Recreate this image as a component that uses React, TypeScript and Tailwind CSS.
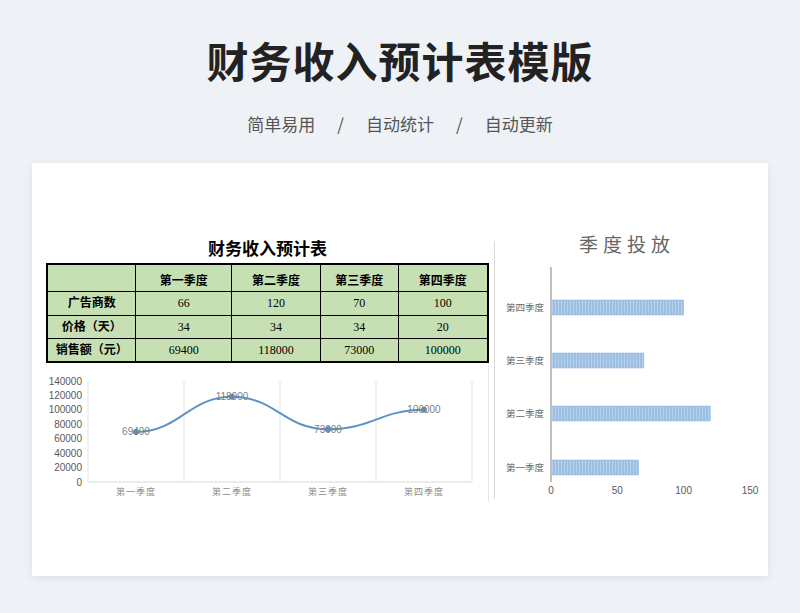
const serif = { fontFamily: '"Liberation Serif", "Noto Sans CJK SC", serif' };

const quarters = ["第一季度", "第二季度", "第三季度", "第四季度"];
const rows = [
  { name: "广告商数", vals: ["66", "120", "70", "100"] },
  { name: "价格（天）", vals: ["34", "34", "34", "20"] },
  { name: "销售额（元）", vals: ["69400", "118000", "73000", "100000"] },
];
const sales = [69400, 118000, 73000, 100000];
const ads = [66, 120, 70, 100];

function LineChart() {
  // svg local coords: width 442, height 137
  const x0 = 42, w = 384, yb = 117, yt = 16;
  const px = (i: number) => x0 + w / 8 + (i * w) / 4;
  const py = (v: number) => yb - ((yb - yt) * v) / 140000;
  const pts = sales.map((v, i) => [px(i), py(v)]);
  let d = `M${pts[0][0]},${pts[0][1]}`;
  for (let i = 0; i < pts.length - 1; i++) {
    const [ax, ay] = pts[i], [bx, by] = pts[i + 1];
    const dx = (bx - ax) / 2.2;
    d += ` C${ax + dx},${ay} ${bx - dx},${by} ${bx},${by}`;
  }
  return (
    <svg width="442" height="137" className="block" style={{ fontFamily: '"Liberation Sans", sans-serif' }}>
      {[0, 1, 2, 3, 4].map((i) => (
        <line key={i} x1={x0 + (i * w) / 4} x2={x0 + (i * w) / 4} y1={yt} y2={yb} stroke="#e3e3e3" />
      ))}
      <line x1={x0} x2={x0 + w} y1={yb} y2={yb} stroke="#d9d9d9" />
      {[0, 20000, 40000, 60000, 80000, 100000, 120000, 140000].map((v) => (
        <text key={v} x={x0 - 6} y={py(v) + 3.5} fontSize="10" fill="#595959" textAnchor="end">{v}</text>
      ))}
      <path d={d} fill="none" stroke="#5b93c5" strokeWidth="2" />
      {pts.map(([x, y], i) => (
        <g key={i}>
          <circle cx={x} cy={y} r="3" fill="#5b93c5" />
          <text x={x} y={y + 3.5} fontSize="10" fill="#7f7f7f" textAnchor="middle">{sales[i]}</text>
        </g>
      ))}
      {quarters.map((q, i) => (
        <text key={q} x={px(i)} y={yb + 13} fontSize="9" fill="#8c8c8c" textAnchor="middle" style={serif} letterSpacing="1">{q}</text>
      ))}
    </svg>
  );
}

function BarChart() {
  // svg width 270, height 260; axis at x=56
  const ax = 56, scale = 199 / 150;
  const ys = [228, 174, 121, 68]; // 第一..第四 bar tops (relative)
  return (
    <svg width="270" height="265" className="block">
      <text x="132" y="20" fontSize="19" fill="#666" textAnchor="middle" letterSpacing="5" style={serif}>季度投放</text>
      <defs>
        <pattern id="st" width="3" height="4" patternUnits="userSpaceOnUse">
          <rect width="3" height="4" fill="#9dc0e2" />
          <rect width="1" height="4" fill="#b4d0ec" />
        </pattern>
      </defs>
      {ys.map((y, i) => (
        <g key={i}>
          <rect x={ax} y={y} width={ads[i] * scale} height="15" fill="url(#st)" stroke="#8db4db" strokeWidth="0.5" />
          <text x={ax - 7} y={y + 11} fontSize="9.5" fill="#666" textAnchor="end" style={serif}>{quarters[i]}</text>
        </g>
      ))}
      <line x1={ax} x2={ax} y1="35" y2="250" stroke="#bfbfbf" strokeWidth="2" />
      {[0, 50, 100, 150].map((v) => (
        <text key={v} x={ax + v * scale} y="262" fontSize="10" fill="#595959" textAnchor="middle" style={{ fontFamily: '"Liberation Sans", sans-serif' }}>{v}</text>
      ))}
    </svg>
  );
}

export default function App() {
  return (
    <div className="w-[800px] h-[613px] bg-[#eef1f5] flex flex-col items-center" style={{ fontFamily: '"Noto Sans CJK SC", sans-serif' }}>
      <h1 className="mt-[30px] text-[42px] leading-[60px] font-bold text-[#222] tracking-[1px]">财务收入预计表模版</h1>
      <div className="mt-[20px] flex items-center gap-[22px] text-[17px] text-[#555] leading-[28px]">
        <span>简单易用</span><span>/</span><span>自动统计</span><span>/</span><span>自动更新</span>
      </div>
      <div className="mt-[25px] w-[736px] h-[413px] bg-white shadow-[0_2px_8px_rgba(0,0,0,0.08)] flex pl-[14px] pt-[76px]">
        <div className="w-[443px] flex flex-col">
          <div className="text-center text-[17px] font-bold text-black leading-[22px] mb-[2px]" style={serif}>财务收入预计表</div>
          <table className="border-collapse border-2 border-black bg-[#c6e0b4] text-[12px] text-black" style={serif}>
            <tbody>
              <tr className="h-[27px]">
                <td className="border border-black w-[89px]"></td>
                {quarters.map((q, i) => (
                  <td key={q} className={`border border-black text-center align-bottom pb-[1px] font-bold ${["w-[96px]", "w-[89px]", "w-[78px]", "w-[90px]"][i]}`}>{q}</td>
                ))}
              </tr>
              {rows.map((r, ri) => (
                <tr key={r.name} className={ri === 1 ? "h-[23px]" : "h-[24px]"}>
                  <td className="border border-black text-center font-bold">{r.name}</td>
                  {r.vals.map((v, i) => (
                    <td key={i} className="border border-black text-center">{v}</td>
                  ))}
                </tr>
              ))}
            </tbody>
          </table>
          <div className="mt-[2px] border-r border-[#e6e6e6]">
            <LineChart />
          </div>
        </div>
        <div className="ml-[5px] mt-[2px] h-[258px] border-l border-[#d9d9d9]" />
        <div className="ml-[0px] -mt-[7px]">
          <BarChart />
        </div>
      </div>
    </div>
  );
}
